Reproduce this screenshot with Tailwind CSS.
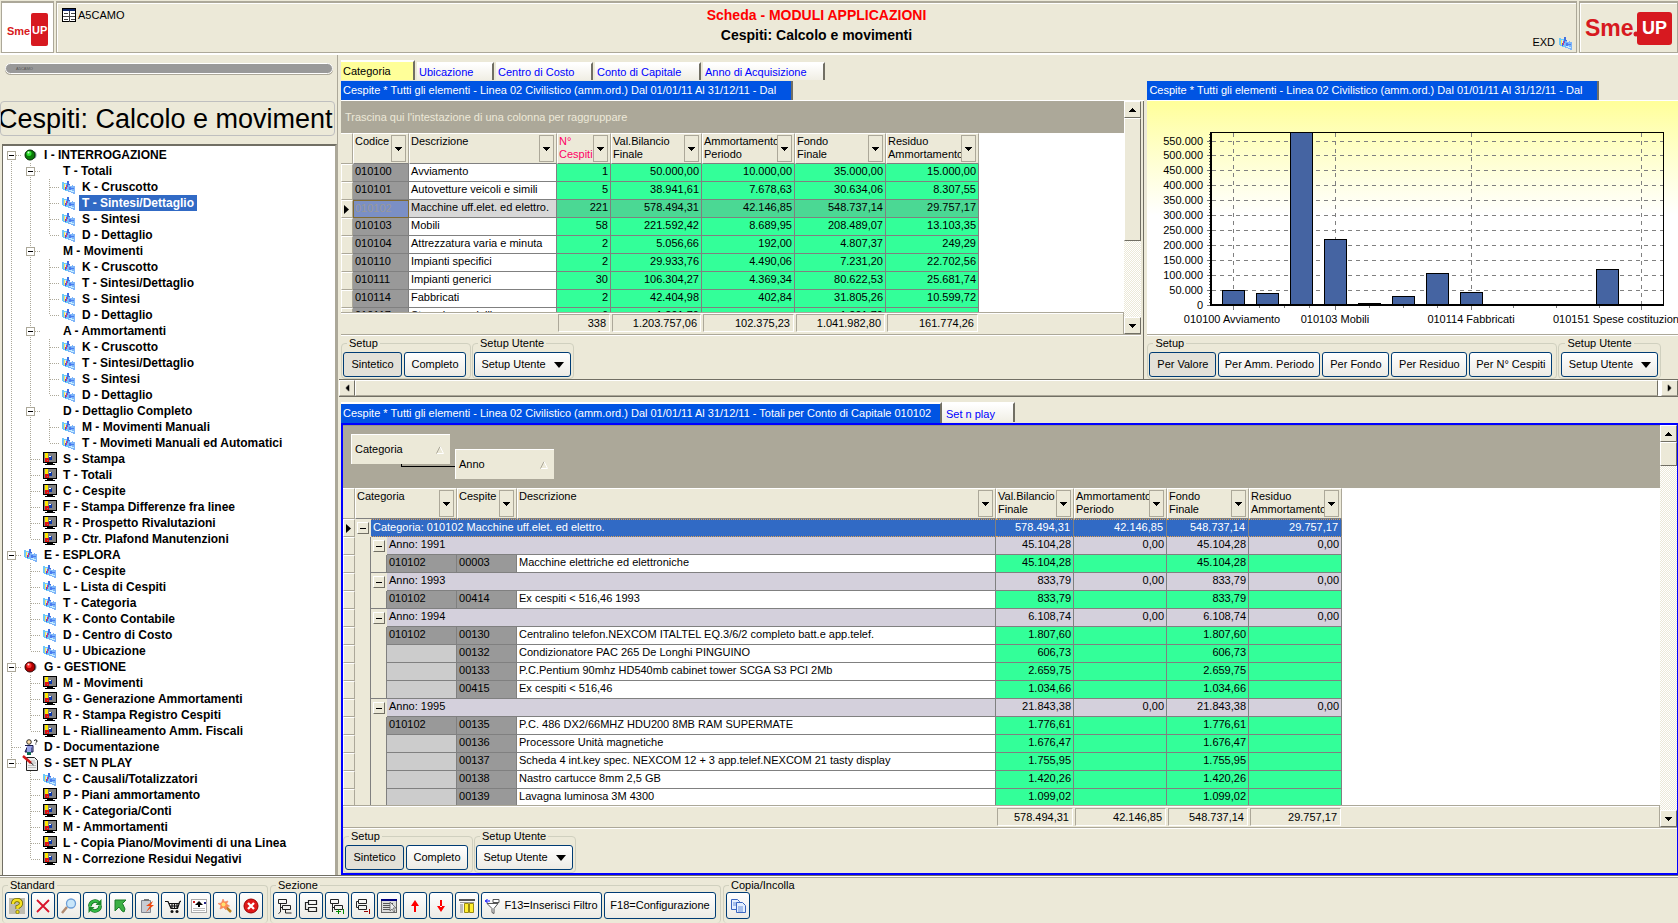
<!DOCTYPE html>
<html lang="it">
<head>
<meta charset="utf-8">
<title>Cespiti: Calcolo e movimenti</title>
<script src="https://cdn.jsdelivr.net/npm/@tailwindcss/browser@4"></script>
</head>
<body class="flex min-h-screen flex-col overflow-x-hidden bg-[#ece9d8] font-['Liberation_Sans',Arial,sans-serif] text-[11px] leading-[13px] text-black">

<svg class="hidden" aria-hidden="true">
  <symbol id="i-view" viewBox="0 0 13 13" shape-rendering="crispEdges"><path d="M0 1h2v1h4v8H3V9H1V8H0z" fill="#6fc8fa"/><path d="M2 3h1v5H2z" fill="#ffe65a"/><path d="M3 3h1v3H3z" fill="#c8f0ff"/><path d="M4 4h1v4H4z" fill="#d8407a"/><path d="M3 6h1v3H3z" fill="#4a50d8"/><path d="M5 0h2v3h1v3H5z" fill="#3f6fe0"/><path d="M6 4h2v1h2v-1h1v1h2v8h-2v-1H9v-1H6z" fill="#7db4f8"/><path d="M7 6h2v1h3v1H9v1H7z" fill="#4a7df0"/><path d="M7 9h3v1h2v1h-3v-1H7z" fill="#c4ecff"/></symbol>
  <symbol id="i-mon" viewBox="0 0 14 14" shape-rendering="crispEdges"><rect x="0" y="0" width="14" height="11" fill="#000"/><rect x="1" y="1" width="12" height="9" fill="#808080"/><rect x="2" y="1" width="3" height="5" fill="#ffe800"/><path d="M2 6h4v4H2z" fill="#e01010"/><path d="M3.500 7.500h1v1h-1z" fill="#808080"/><rect x="6" y="4" width="3" height="4" fill="#0a36a8"/><path d="M6 4h2v1H6z" fill="#fff"/><rect x="4" y="11" width="6" height="1" fill="#000"/><rect x="2" y="12" width="10" height="1" fill="#000"/></symbol>
  <symbol id="i-green" viewBox="0 0 14 14"><circle cx="8.500" cy="7" r="4" fill="#8a9aa8"/><circle cx="6" cy="7" r="5" fill="#0a7a0a" stroke="#002800"/><circle cx="5" cy="5.500" r="2.500" fill="#30e030"/><circle cx="4.500" cy="4.500" r="1" fill="#d8ffd8"/></symbol>
  <symbol id="i-red" viewBox="0 0 14 14"><circle cx="8.500" cy="7" r="4" fill="#8a9aa8"/><circle cx="6" cy="7" r="5" fill="#b00000" stroke="#300000"/><circle cx="5" cy="5.500" r="2.500" fill="#ff3030"/><circle cx="4.500" cy="4.500" r="1" fill="#ffe0e0"/></symbol>
  <symbol id="i-doc" viewBox="0 0 14 16"><circle cx="5" cy="3" r="2.300" fill="#ffe0b0" stroke="#000" stroke-width=".8"/><path d="M1 6.500h8V13H7V8.500M3 8.500V13H1z" fill="#9aa4ea" stroke="#14144a"/><path d="M3 7h4v6H3z" fill="#9aa4ea"/><path d="M3 13h4v3H3z" fill="#0c6a50"/><path d="M10.500 2q0-1.200 1.200-1.200T13 2t-1.200 1.500M11.800 4.500v1" fill="none" stroke="#111"/></symbol>
  <symbol id="i-note" viewBox="0 0 16 16"><path d="M4.500 2.500h8l3 3v10h-11z" fill="#f0f0f0" stroke="#222"/><path d="M7 8h7M6 10.500h8M6 12.500h8M9 6h4" stroke="#bdbdbd"/><path d="M1 1l8 7" stroke="#d01818" stroke-width="2.500"/><path d="M8.500 7.500l3 2.500" stroke="#222"/></symbol>
  <symbol id="i-tri" viewBox="0 0 7 4"><path d="M0 0h7v1H6v1H5v1H4v1H3V3H2V2H1V1H0z"/></symbol>
</svg>

<!-- Header -->
<header class="flex h-[55px] shrink-0 gap-0.5 border-b-2 border-white pt-px pl-px">
  <div class="flex w-[53px] items-center justify-center border border-t-2 border-[#aca899] bg-white">
    <svg width="48" height="40" viewBox="0 0 48 40" role="img" aria-label="Sme.UP"><rect x="27" y="5" width="17" height="33" rx="2" fill="#d71920"/><text x="3" y="27" font-family="Liberation Sans" font-weight="700" font-size="11" fill="#d71920">Sme</text><text x="28" y="26" font-family="Liberation Sans" font-weight="700" font-size="11" fill="#fff">UP</text></svg>
  </div>
  <div class="grid flex-1 grid-cols-[1fr_auto_1fr] border border-t-2 border-[#aca899] px-1 shadow-[inset_1px_1px_0_#fff]">
    <div class="flex items-start gap-0.5 pt-1">
      <svg class="mt-px ml-px" width="14" height="14" viewBox="0 0 14 14" shape-rendering="crispEdges"><rect x=".500" y=".500" width="13" height="13" fill="#fff" stroke="#000"/><rect x="1" y="1" width="12" height="2" fill="#0a246a"/><path d="M7.500 3v11M1 8.500h12M2 5.500h4M2 11.500h4M9 5.500h4M9 11.500h4" stroke="#444"/></svg>
      <span class="pt-0.5">A5CAMO</span>
    </div>
    <div class="text-center text-[14px] font-bold">
      <p class="pt-[3px] leading-[18px] text-[#ff0000]">Scheda - MODULI APPLICAZIONI</p>
      <h1 class="leading-[22px]">Cespiti: Calcolo e movimenti</h1>
    </div>
    <div class="flex items-end justify-end gap-1 pb-0.5"><span class="pb-px">EXD</span><svg width="13" height="13"><use href="#i-view"/></svg></div>
  </div>
  <div class="flex w-[99px] items-center justify-center border border-t-2 border-[#aca899] shadow-[inset_1px_1px_0_#fff]">
    <svg width="90" height="40" viewBox="0 0 90 40" role="img" aria-label="Sme.UP"><rect x="53" y="4" width="35" height="33" rx="3" fill="#d71920"/><text x="1" y="28" font-family="Liberation Sans" font-weight="700" font-size="23" fill="#d71920">Sme</text><circle cx="52" cy="26" r="2.500" fill="#d71920"/><text x="58" y="26" font-family="Liberation Sans" font-weight="700" font-size="18" fill="#fff">UP</text></svg>
  </div>
</header>

<main class="flex flex-1">
  <!-- Navigation -->
  <aside class="flex w-[337px] shrink-0 flex-col">
    <div class="mt-2 ml-[5px] mr-1 flex h-[11px] items-center rounded-full border border-white bg-[#999] px-2.5 shadow-[0_1px_0_#aca899]"><span class="text-[4px] leading-[5px] text-[#555]">A5CAMO</span></div>
    <div class="mt-[27px] mr-0.5 flex h-[35px] items-center justify-start overflow-hidden rounded-[4px] border border-[#bfbfbf]">
      <h2 class="-ml-[3px] text-[27px] leading-[34px] whitespace-nowrap">Cespiti: Calcolo e movimenti</h2>
    </div>
    <nav class="mt-2 ml-0.5 flex-1 border-t-2 border-r-2 border-l border-[#716f64] border-r-[#aca899] bg-white pt-px" aria-label="Menu">
      <ul id="tree" class="text-[12px] leading-4 font-bold"></ul>
    </nav>
  </aside>

  <div class="flex min-w-0 flex-1 flex-col border-l border-[#aca899]">
    <div class="flex">
      <!-- Summary panel -->
      <section class="flex min-w-0 flex-[807] flex-col pt-[5px] pl-[3px]">
        <div class="flex items-end gap-0.5" role="tablist">
          <button role="tab" class="h-5 w-[74px] border-t-2 border-r-2 border-t-white border-r-[#716f64] bg-[#ffff99] pl-0.5 text-left">Categoria</button>
          <button role="tab" class="h-[18px] w-[77px] border-t-2 border-r-2 border-t-white border-r-[#716f64] bg-linear-to-b from-white to-[#f0eee4] pl-0.5 text-left text-[#0000ff]">Ubicazione</button>
          <button role="tab" class="h-[18px] w-[97px] border-t-2 border-r-2 border-t-white border-r-[#716f64] bg-linear-to-b from-white to-[#f0eee4] pl-0.5 text-left text-[#0000ff]">Centro di Costo</button>
          <button role="tab" class="h-[18px] w-[106px] border-t-2 border-r-2 border-t-white border-r-[#716f64] bg-linear-to-b from-white to-[#f0eee4] pl-0.5 text-left text-[#0000ff]">Conto di Capitale</button>
          <button role="tab" class="h-[18px] w-[122px] border-t-2 border-r-2 border-t-white border-r-[#716f64] bg-linear-to-b from-white to-[#f0eee4] pl-0.5 text-left text-[#0000ff]">Anno di Acquisizione</button>
        </div>
        <div class="mt-px flex h-5 border-b border-white">
          <h3 class="w-[452px] border-r-2 border-[#716f64] bg-[#0054e3] pl-0.5 leading-[18px] whitespace-nowrap text-white">Cespite * Tutti gli elementi - Linea 02 Civilistico (amm.ord.) Dal 01/01/11 Al 31/12/11 - Dal</h3>
        </div>
        <div class="border-r border-[#716f64] pr-0.5">
          <div class="flex h-[234px] border-b border-[#aca899] bg-white">
            <div class="flex min-w-0 flex-1 flex-col">
              <p class="h-8 shrink-0 bg-[#aca899] pl-1 leading-8 text-[#ece9d8]">Trascina qui l'intestazione di una colonna per raggruppare</p>
              <div class="h-[179px] shrink-0 overflow-hidden" id="t1"></div>
              <div id="f1" class="flex flex-1 border-t border-r border-[#aca899] bg-[#ece9d8] pl-[216px] shadow-[inset_0_1px_0_#fff]"></div>
            </div>
            <div class="flex w-[17px] flex-col bg-[repeating-conic-gradient(#fff_0_25%,#ece9d8_0_50%)] bg-[length:2px_2px]">
              <button aria-label="Su" class="flex h-[17px] items-center justify-center border border-t-white border-r-[#716f64] border-b-[#716f64] border-l-white bg-[#ece9d8]"><svg class="rotate-180" width="7" height="4"><use href="#i-tri"/></svg></button>
              <div class="h-[123px] border border-t-white border-r-[#716f64] border-b-[#716f64] border-l-white bg-[#ece9d8]"></div>
              <button aria-label="Giù" class="mt-auto flex h-[17px] items-center justify-center border border-t-white border-r-[#716f64] border-b-[#716f64] border-l-white bg-[#ece9d8]"><svg width="7" height="4"><use href="#i-tri"/></svg></button>
            </div>
          </div>
          <div class="flex h-11 gap-px border-t border-white pt-px">
            <fieldset class="flex gap-0.5 rounded-[4px] border border-[#d0d0bf] pr-1 pl-px"><legend class="ml-1 px-0.5">Setup</legend>
              <button class="mt-0.5 h-[25px] w-[59px] rounded-[3px] border border-[#003c74] bg-[#e3e1d8]">Sintetico</button>
              <button class="mt-0.5 h-[25px] w-[62px] rounded-[3px] border border-[#003c74] bg-linear-to-b from-white to-[#ecebe5]">Completo</button>
            </fieldset>
            <fieldset class="flex rounded-[4px] border border-[#d0d0bf] pr-0.5 pl-px"><legend class="ml-1 px-0.5">Setup Utente</legend>
              <button class="mt-0.5 flex h-[25px] w-[97px] items-center justify-center gap-2 rounded-[3px] border border-[#003c74] bg-linear-to-b from-white to-[#ecebe5]" aria-haspopup="menu">Setup Utente <svg width="10" height="6"><path d="M0 0h10L5 6z"/></svg></button>
            </fieldset>
          </div>
        </div>
      </section>

      <!-- Chart panel -->
      <section class="flex min-w-0 flex-[533] flex-col pt-[25px] pl-[3px]">
        <div class="mt-px flex h-5 border-b border-white">
          <h3 class="w-[452px] border-r-2 border-[#716f64] bg-[#0054e3] pl-0.5 leading-[18px] whitespace-nowrap text-white">Cespite * Tutti gli elementi - Linea 02 Civilistico (amm.ord.) Dal 01/01/11 Al 31/12/11 - Dal</h3>
        </div>
        <div class="h-[234px] overflow-hidden border-b border-[#aca899] bg-linear-to-b from-[#ffff99] to-white to-[49%]">
          <svg id="chart" width="531" height="234" viewBox="1147 101 531 234" font-family="Liberation Sans" font-size="11" shape-rendering="crispEdges" role="img" aria-label="Valore per categoria"></svg>
        </div>
        <div class="flex h-11 gap-px border-t border-white pt-px">
          <fieldset class="flex gap-0.5 rounded-[4px] border border-[#d0d0bf] pr-1 pl-px"><legend class="ml-1 px-0.5">Setup</legend>
            <button class="mt-0.5 h-[25px] w-[67px] rounded-[3px] border border-[#003c74] bg-[#e3e1d8]">Per Valore</button>
            <button class="mt-0.5 h-[25px] w-[102px] rounded-[3px] border border-[#003c74] bg-linear-to-b from-white to-[#ecebe5]">Per Amm. Periodo</button>
            <button class="mt-0.5 h-[25px] w-[67px] rounded-[3px] border border-[#003c74] bg-linear-to-b from-white to-[#ecebe5]">Per Fondo</button>
            <button class="mt-0.5 h-[25px] w-[76px] rounded-[3px] border border-[#003c74] bg-linear-to-b from-white to-[#ecebe5]">Per Residuo</button>
            <button class="mt-0.5 h-[25px] w-[83px] rounded-[3px] border border-[#003c74] bg-linear-to-b from-white to-[#ecebe5]">Per N° Cespiti</button>
          </fieldset>
          <fieldset class="flex rounded-[4px] border border-[#d0d0bf] px-0.5"><legend class="ml-1 px-0.5">Setup Utente</legend>
            <button class="mt-0.5 flex h-[25px] w-[97px] items-center justify-center gap-2 rounded-[3px] border border-[#003c74] bg-linear-to-b from-white to-[#ecebe5]" aria-haspopup="menu">Setup Utente <svg width="10" height="6"><path d="M0 0h10L5 6z"/></svg></button>
          </fieldset>
        </div>
      </section>
    </div>

    <!-- Horizontal scroll bar -->
    <div class="ml-px flex h-[18px] border-y border-[#716f64]">
      <button aria-label="Sinistra" class="flex w-4 items-center justify-center border border-t-white border-r-[#716f64] border-b-[#aca899] border-l-white"><svg class="rotate-90" width="7" height="4"><use href="#i-tri"/></svg></button>
      <div class="flex-1 border border-t-white border-r-[#716f64] border-b-[#aca899] border-l-white"></div>
      <div class="w-[3px] bg-white"></div>
      <button aria-label="Destra" class="flex w-[17px] items-center justify-center border border-t-white border-r-[#716f64] border-b-[#aca899] border-l-white"><svg class="-rotate-90" width="7" height="4"><use href="#i-tri"/></svg></button>
    </div>

    <!-- Detail panel -->
    <section class="mt-[5px] flex flex-1 flex-col pl-[3px]">
      <div class="flex" role="tablist">
        <button role="tab" class="h-[21px] w-[601px] border-t-2 border-r-2 border-t-white border-r-[#716f64] bg-[#0054e3] pl-0.5 text-left whitespace-nowrap text-white">Cespite * Tutti gli elementi - Linea 02 Civilistico (amm.ord.) Dal 01/01/11 Al 31/12/11 - Totali per Conto di Capitale 010102</button>
        <button role="tab" class="h-[20px] w-[73px] border-t-2 border-r-2 border-t-white border-r-[#716f64] bg-linear-to-b from-white to-[#f0eee4] pt-0.5 pl-1 text-left text-[#0000ff]">Set n play</button>
      </div>
      <div class="flex flex-1 flex-col border-2 border-r-1 border-[#0000ff]">
        <div class="flex flex-1 border-b border-[#aca899] bg-white">
          <div class="flex min-w-0 flex-1 flex-col">
            <div class="relative flex h-[63px] shrink-0 items-start gap-[5px] border-t border-[#999685] bg-[#aca899] pt-2 pl-2">
              <button class="flex h-[30px] w-[99px] items-center justify-between border-t border-l border-white bg-[#ece9d8] pr-1.5 pl-[3px]">Categoria <svg width="8" height="8" viewBox="0 0 8 8"><path d="M.500 7.500L4 .500" stroke="#aca899" fill="none"/><path d="M4 .500l3.500 7H1" stroke="#fff" fill="none"/></svg></button>
              <button class="mt-[15px] flex h-[30px] w-[99px] items-center justify-between border-t border-l border-white bg-[#ece9d8] pr-1.5 pl-[3px]">Anno <svg width="8" height="8" viewBox="0 0 8 8"><path d="M.500 7.500L4 .500" stroke="#aca899" fill="none"/><path d="M4 .500l3.500 7H1" stroke="#fff" fill="none"/></svg></button>
              <div class="absolute top-[38px] left-[58px] h-[3px] w-[54px] border-b border-l border-black"></div>
            </div>
            <div class="min-h-[317px] flex-[1_1_0] overflow-hidden" id="t2"></div>
            <div id="f2" class="flex h-[22px] shrink-0 border-t border-r border-[#aca899] bg-[#ece9d8] pt-px pl-[653px] shadow-[inset_0_1px_0_#fff]"></div>
          </div>
          <div class="flex w-[17px] flex-col bg-[repeating-conic-gradient(#fff_0_25%,#ece9d8_0_50%)] bg-[length:2px_2px]">
            <button aria-label="Su" class="flex h-[17px] items-center justify-center border border-t-white border-r-[#716f64] border-b-[#716f64] border-l-white bg-[#ece9d8]"><svg class="rotate-180" width="7" height="4"><use href="#i-tri"/></svg></button>
            <div class="h-6 border border-t-white border-r-[#716f64] border-b-[#716f64] border-l-white bg-[#ece9d8]"></div>
            <button aria-label="Giù" class="mt-auto flex h-[17px] items-center justify-center border border-t-white border-r-[#716f64] border-b-[#716f64] border-l-white bg-[#ece9d8]"><svg width="7" height="4"><use href="#i-tri"/></svg></button>
          </div>
        </div>
        <div class="flex h-[45px] gap-px border-t border-white pt-px">
          <fieldset class="flex gap-0.5 rounded-[4px] border border-[#d0d0bf] pr-1 pl-px"><legend class="ml-1 px-0.5">Setup</legend>
            <button class="mt-0.5 h-[25px] w-[59px] rounded-[3px] border border-[#003c74] bg-[#e3e1d8]">Sintetico</button>
            <button class="mt-0.5 h-[25px] w-[62px] rounded-[3px] border border-[#003c74] bg-linear-to-b from-white to-[#ecebe5]">Completo</button>
          </fieldset>
          <fieldset class="flex rounded-[4px] border border-[#d0d0bf] pr-0.5 pl-px"><legend class="ml-1 px-0.5">Setup Utente</legend>
            <button class="mt-0.5 flex h-[25px] w-[97px] items-center justify-center gap-2 rounded-[3px] border border-[#003c74] bg-linear-to-b from-white to-[#ecebe5]" aria-haspopup="menu">Setup Utente <svg width="10" height="6"><path d="M0 0h10L5 6z"/></svg></button>
          </fieldset>
        </div>
      </div>
    </section>
  </div>
</main>

<!-- Tool bar -->
<footer class="flex h-12 shrink-0 gap-0.5 border-t border-[#716f64] pt-0.5 pl-0.5 shadow-[inset_0_1px_0_#fff,inset_0_2px_0_#aca899]">
  <fieldset class="flex gap-0.5 rounded-[4px] border border-b-0 border-[#d0d0bf] pr-1 pl-0.5"><legend class="ml-[3px] px-0.5 leading-[14px]">Standard</legend><div id="std" class="flex gap-0.5"></div></fieldset>
  <fieldset class="flex gap-0.5 rounded-[4px] border border-b-0 border-[#d0d0bf] pr-1 pl-0.5"><legend class="ml-[3px] px-0.5 leading-[14px]">Sezione</legend><div id="sez" class="flex gap-0.5"></div>
    <button class="flex h-[27px] w-[121px] items-center justify-center gap-1 rounded-[3px] border border-[#003c74] bg-linear-to-b from-white to-[#ecebe5] whitespace-nowrap"><svg width="15" height="16" viewBox="0 0 15 16"><path d="M2 5.500h11l-4 5v5l-2-1v-4z" fill="#fff" stroke="#555"/><path d="M8 1.500h6v3H8z" fill="#fff" stroke="#555"/><path d="M0 3h5M2.500 1L.500 3l2 2" stroke="#00f" fill="none"/></svg>F13=Inserisci Filtro</button>
    <button class="h-[27px] w-[112px] rounded-[3px] border border-[#003c74] bg-linear-to-b from-white to-[#ecebe5] whitespace-nowrap">F18=Configurazione</button>
  </fieldset>
  <fieldset class="flex rounded-[4px] border border-r-0 border-b-0 border-[#d0d0bf] pl-0.5"><legend class="ml-[3px] px-0.5 leading-[14px]">Copia/Incolla</legend><div id="cop" class="flex"></div></fieldset>
</footer>

<script>
const $ = id => document.getElementById(id);

/* ---- tree: [level, icon, text, expandable] ---- */
const nodes = [
[0,'i-green','I - INTERROGAZIONE',1],[1,'','T - Totali',1],[2,'i-view','K - Cruscotto'],[2,'i-view','T - Sintesi/Dettaglio'],[2,'i-view','S - Sintesi'],[2,'i-view','D - Dettaglio'],
[1,'','M - Movimenti',1],[2,'i-view','K - Cruscotto'],[2,'i-view','T - Sintesi/Dettaglio'],[2,'i-view','S - Sintesi'],[2,'i-view','D - Dettaglio'],
[1,'','A - Ammortamenti',1],[2,'i-view','K - Cruscotto'],[2,'i-view','T - Sintesi/Dettaglio'],[2,'i-view','S - Sintesi'],[2,'i-view','D - Dettaglio'],
[1,'','D - Dettaglio Completo',1],[2,'i-view','M - Movimenti Manuali'],[2,'i-view','T - Movimeti Manuali ed Automatici'],
[1,'i-mon','S - Stampa'],[1,'i-mon','T - Totali'],[1,'i-mon','C - Cespite'],[1,'i-mon','F - Stampa Differenze fra linee'],[1,'i-mon','R - Prospetto Rivalutazioni'],[1,'i-mon','P - Ctr. Plafond Manutenzioni'],
[0,'i-view','E - ESPLORA',1],[1,'i-view','C - Cespite'],[1,'i-view','L - Lista di Cespiti'],[1,'i-view','T - Categoria'],[1,'i-view','K - Conto Contabile'],[1,'i-view','D - Centro di Costo'],[1,'i-view','U - Ubicazione'],
[0,'i-red','G - GESTIONE',1],[1,'i-mon','M - Movimenti'],[1,'i-mon','G - Generazione Ammortamenti'],[1,'i-mon','R - Stampa Registro Cespiti'],[1,'i-mon','L - Riallineamento Amm. Fiscali'],
[0,'i-doc','D - Documentazione'],[0,'i-note','S - SET N PLAY',1],
[1,'i-view','C - Causali/Totalizzatori'],[1,'i-mon','P - Piani ammortamento'],[1,'i-mon','K - Categoria/Conti'],[1,'i-mon','M - Ammortamenti'],[1,'i-mon','L - Copia Piano/Movimenti di una Linea'],[1,'i-mon','N - Correzione Residui Negativi']];
const sizes = { 'i-view': [13, 13], 'i-mon': [14, 14], 'i-green': [14, 14], 'i-red': [14, 14], 'i-doc': [14, 16], 'i-note': [16, 16] };
const continues = (i, lv) => { for (let k = i + 1; k < nodes.length; k++) { if (nodes[k][0] === lv) return true; if (nodes[k][0] < lv) return false; } return false; };
$('tree').innerHTML = nodes.map(([lv, icon, text, box], i) => {
  let g = '';
  for (let c = 0; c <= lv; c++) {
    const down = continues(i, c), own = c === lv;
    let d = '';
    if (own) d += i ? (down ? 'M8.500 0V16' : 'M8.500 0V8') : 'M8.500 8V16';
    else if (down) d += 'M8.500 0V16';
    if (own) d += 'M9 8.500H19';
    g += `<svg class="shrink-0" width="19" height="16" shape-rendering="crispEdges"><path d="${d}" stroke="#aca899" stroke-dasharray="1 1" fill="none"/>${own && box ? '<rect x="4.500" y="4.500" width="8" height="8" fill="#fff" stroke="#aca899"/><path d="M6 8.500h5" stroke="#000"/>' : ''}</svg>`;
  }
  const ic = icon ? `<svg width="${sizes[icon][0]}" height="${sizes[icon][1]}"><use href="#${icon}"/></svg>` : '';
  return `<li class="flex h-4 whitespace-nowrap">${g}<span class="${icon === 'i-note' ? 'flex w-[19px] shrink-0 items-center' : 'flex w-[19px] shrink-0 items-center pl-0.5'}">${ic}</span><a href="#" class="${i === 3 ? 'bg-[#316ac5] px-[3px] text-white' : 'px-[3px]'}">${text}</a></li>`;
}).join('');

/* ---- tables ---- */
const cols = ws => '<colgroup>' + ws.map(w => `<col style="width:${w}px">`).join('') + '</colgroup>';
const th = (t, span = 1, pink) => `<th colspan="${span}" class="h-[31px] border-t border-r border-b border-l border-t-white border-r-[#aca899] border-b-[#808080] border-l-white bg-[#ece9d8] p-0 text-left align-top font-normal"><div class="flex justify-between pt-px pr-0.5 pl-px"><span class="${pink ? 'w-0 flex-1 whitespace-nowrap text-[#ff0066]' : 'w-0 flex-1 whitespace-nowrap'}">${t}</span><button aria-label="Filtro" class="flex h-[27px] w-[15px] shrink-0 items-center justify-center border border-[#aca899] bg-[#ece9d8]"><svg width="7" height="4"><use href="#i-tri"/></svg></button></div></th>`;
const thInd = '<th class="h-[31px] border-t border-r border-b border-t-white border-r-[#aca899] border-b-[#aca899] bg-[#ece9d8] p-0"></th>';
const ind = cur => `<td class="h-[18px] border-t border-r border-b border-l border-t-white border-r-[#aca899] border-b-[#aca899] border-l-white bg-[#ece9d8] p-0">${cur ? '<svg class="ml-0.5" width="5" height="9"><path d="M0 0l5 4.500L0 9z"/></svg>' : ''}</td>`;
const N = 'h-[18px] overflow-hidden border-r border-b border-[#808080] bg-[#33ff99] py-0 pr-0.5 text-right align-top leading-[15px]';
const NS = 'h-[18px] overflow-hidden border-r border-b border-[#808080] bg-[#4bd894] py-0 pr-0.5 text-right align-top leading-[15px]';
const NG = 'h-[18px] overflow-hidden border-r border-b border-[#808080] bg-[#d4d0dc] py-0 pr-0.5 text-right align-top leading-[15px]';
const NB = 'h-[18px] overflow-hidden border-t border-r border-b border-t-[#e0a050] border-r-[#808080] border-b-[#e0a050] [border-bottom-style:dotted] [border-top-style:dotted] bg-[#316ac5] py-0 pr-[3px] text-right align-top leading-[14px] text-white';
const TW = 'h-[18px] overflow-hidden border-r border-b border-[#808080] bg-white py-0 pl-0.5 align-top leading-[15px] whitespace-nowrap';
const TS = 'h-[18px] overflow-hidden border-r border-b border-[#808080] bg-[#d8d8d8] py-0 pl-0.5 align-top leading-[15px] whitespace-nowrap';
const CD = 'h-[18px] overflow-hidden border-r border-b border-[#808080] bg-[#999999] py-0 pl-0.5 align-top leading-[15px]';
const CS = 'h-[18px] overflow-hidden border border-[#806a30] bg-[#7b8fc4] py-0 pl-px align-top leading-[14px] text-[#999999]';
const CE = 'h-[18px] border-r border-b border-[#808080] bg-[#cccccc] p-0';
const td = (c, t, span = 1) => `<td class="${c}" colspan="${span}">${t}</td>`;

const rows1 = [
['010100','Avviamento','1','50.000,00','10.000,00','35.000,00','15.000,00'],
['010101','Autovetture veicoli e simili','5','38.941,61','7.678,63','30.634,06','8.307,55'],
['010102','Macchine uff.elet. ed elettro.','221','578.494,31','42.146,85','548.737,14','29.757,17'],
['010103','Mobili','58','221.592,42','8.689,95','208.489,07','13.103,35'],
['010104','Attrezzatura varia e minuta','2','5.056,66','192,00','4.807,37','249,29'],
['010110','Impianti specifici','2','29.933,76','4.490,06','7.231,20','22.702,56'],
['010111','Impianti generici','30','106.304,27','4.369,34','80.622,53','25.681,74'],
['010114','Fabbricati','2','42.404,98','402,84','31.805,26','10.599,72'],
['010117','Stampi e modelli','6','1.291,70','','1.291,70','']];
$('t1').innerHTML = `<table class="w-[638px] table-fixed border-separate border-spacing-0">${cols([12,56,148,54,91,93,91,93])}<thead><tr>${thInd}${th('Codice')}${th('Descrizione')}${th('N°<br>Cespiti',1,1)}${th('Val.Bilancio<br>Finale')}${th('Ammortamento<br>Periodo')}${th('Fondo<br>Finale')}${th('Residuo<br>Ammortamento')}</tr></thead><tbody>` +
 rows1.map((r, i) => { const s = i === 2; return '<tr>' + ind(s) + td(s ? CS : CD, r[0]) + td(s ? TS : TW, r[1]) + r.slice(2).map(v => td(s ? NS : N, v)).join('') + '</tr>'; }).join('') + '</tbody></table>';

const foot = (id, list) => $(id).innerHTML = list.map(([w, v]) => `<div class="shrink-0 p-px" style="width:${w}px"><div class="h-[18px] border border-t-[#aca899] border-r-white border-b-white border-l-[#aca899] pr-[3px] text-right leading-4">${v}</div></div>`).join('');
foot('f1', [[54,'338'],[91,'1.203.757,06'],[93,'102.375,23'],[91,'1.041.982,80'],[93,'161.774,26']]);
foot('f2', [[78,'578.494,31'],[93,'42.146,85'],[82,'548.737,14'],[93,'29.757,17']]);

const minus = '<button aria-label="Comprimi" class="ml-0.5 flex h-3 w-3 items-center justify-center border border-t-white border-r-[#716f64] border-b-[#716f64] border-l-white bg-[#ece9d8]"><svg width="6" height="1"><rect width="6" height="1"/></svg></button>';
const data = [['1991','45.104,28',[['00003','Macchine elettriche ed elettroniche','45.104,28']]],
['1993','833,79',[['00414','Ex cespiti &lt; 516,46 1993','833,79']]],
['1994','6.108,74',[['00130','Centralino telefon.NEXCOM ITALTEL EQ.3/6/2 completo batt.e app.telef.','1.807,60'],['00132','Condizionatore PAC 265 De Longhi PINGUINO','606,73'],['00133','P.C.Pentium 90mhz HD540mb cabinet tower SCGA S3 PCI 2Mb','2.659,75'],['00415','Ex cespiti &lt; 516,46','1.034,66']]],
['1995','21.843,38',[['00135','P.C. 486 DX2/66MHZ HDU200 8MB RAM SUPERMATE','1.776,61'],['00136','Processore Unità magnetiche','1.676,47'],['00137','Scheda 4 int.key spec. NEXCOM 12 + 3 app.telef.NEXCOM 21 tasty display','1.755,95'],['00138','Nastro cartucce 8mm 2,5 GB','1.420,26'],['00139','Lavagna luminosa 3M 4300','1.099,02']]]];
const IN = 'h-[18px] border-r border-[#808080] bg-[#ece9d8] p-0';
const INL = 'h-[18px] border-r border-b border-[#808080] bg-[#ece9d8] p-0';
const BX = 'h-[18px] bg-[#ece9d8] p-0';
let b = '<tr>' + ind(1) + td(BX, minus) + td('h-[18px] border-t border-r border-b border-t-[#e0a050] border-r-[#808080] border-b-[#e0a050] [border-bottom-style:dotted] [border-top-style:dotted] bg-[#316ac5] py-0 pl-0.5 align-top leading-[14px] text-white', 'Categoria: 010102 Macchine uff.elet. ed elettro.', 4) + ['578.494,31','42.146,85','548.737,14','29.757,17'].map(v => td(NB, v)).join('') + '</tr>';
for (const [y, tot, items] of data) {
  b += '<tr>' + ind() + td(IN, '') + td(BX, minus) + td('h-[18px] border-r border-b border-[#808080] bg-[#d4d0dc] py-0 pl-0.5 align-top leading-[15px]', 'Anno: ' + y, 3) + [tot,'0,00',tot,'0,00'].map(v => td(NG, v)).join('') + '</tr>';
  items.forEach((r, i) => { b += '<tr>' + ind() + td(IN, '') + td(i === items.length - 1 && y !== '1995' ? INL : IN, '') + (i ? td(CE, '') : td(CD, '010102')) + td(CD, r[0]) + td(TW, r[1]) + [r[2],'',r[2],''].map(v => td(N, v)).join('') + '</tr>'; });
}
$('t2').innerHTML = `<table class="w-[999px] table-fixed border-separate border-spacing-0">${cols([12,16,16,70,60,479,78,93,82,93])}<thead><tr>${thInd}${th('Categoria',3)}${th('Cespite')}${th('Descrizione')}${th('Val.Bilancio<br>Finale')}${th('Ammortamento<br>Periodo')}${th('Fondo<br>Finale')}${th('Residuo<br>Ammortamento')}</tr></thead><tbody>${b}</tbody></table>`;

/* ---- chart ---- */
let s = '';
const labels = ['0','50.000','100.000','150.000','200.000','250.000','300.000','350.000','400.000','450.000','500.000','550.000'];
labels.forEach((l, i) => { const y = 305.5 - 15 * i + (i === 11 ? 1 : 0); s += `<text x="1203" y="${y + 3.500}" text-anchor="end">${l}</text><path d="M1207 ${y}h4" stroke="#777"/>`; if (i) s += `<path d="M1212 ${y}H1663" stroke="#808080" stroke-dasharray="4 4"/>`; });
s += '<path d="M1209.500 134V304" stroke="#555" stroke-dasharray="1 2"/>';
[1233.5,1335.5,1471.5,1641.5].forEach(x => s += `<path d="M${x} 133V305" stroke="#808080" stroke-dasharray="4 4"/><path d="M${x} 306v4" stroke="#777"/>`);
[1259.5,1284.5,1309.5,1369.5,1403.5,1437.5,1513.5,1556.5,1599.5].forEach(x => s += `<path d="M${x} 306v2" stroke="#777"/>`);
s += '<rect x="1211" y="132.500" width="452.500" height="173" fill="none" stroke="#000"/>';
[[1222,290],[1256,293],[1290,132],[1324,239],[1358,303],[1392,296],[1426,273],[1460,292],[1596,269]].forEach(([x, y]) => s += `<rect x="${x + .5}" y="${y + .5}" width="22" height="${305 - y}" fill="#4564a2" stroke="#000"/>`);
s += '<path d="M1211 132V306M1210 305H1664" stroke="#000" stroke-width="2"/>';
[[1232,'010100 Avviamento'],[1335,'010103 Mobili'],[1471,'010114 Fabbricati']].forEach(([x, t]) => s += `<text x="${x}" y="323" text-anchor="middle">${t}</text>`);
s += '<text x="1553" y="323">010151 Spese costituzione</text>';
$('chart').innerHTML = s;

/* ---- tool bar ---- */
const tb = list => list.map(([n, g]) => `<button aria-label="${n}" class="flex h-[27px] w-6 items-center justify-center rounded-[3px] border border-[#003c74] bg-linear-to-b from-white to-[#ecebe5]"><svg class="shrink-0" width="16" height="16" viewBox="0 0 16 16" fill="none">${g}</svg></button>`).join('');
const tree = '<path d="M1.500 1.500h8v4h-8zM5.500 7.500h8v4h-8zM3.500 6v8M3.500 9.500h2" stroke="#222"/>';
$('std').innerHTML = tb([
['Aiuto','<rect width="16" height="16" fill="#c0bdb0"/><path d="M4 6q0-4 4-4t4 3.500Q12 8 8.500 9v2" stroke="#6b6300" stroke-width="4"/><path d="M4 6q0-4 4-4t4 3.500Q12 8 8.500 9v2" stroke="#f4e020" stroke-width="2.500"/><circle cx="8.500" cy="14" r="1.700" fill="#f4e020" stroke="#6b6300" stroke-width=".7"/>'],
['Chiudi','<path d="M2 2l12 12M14 2L2 14" stroke="#d8142c" stroke-width="1.800"/>'],
['Cerca','<path d="M1 15l5-6" stroke="#b08a70" stroke-width="2.500"/><circle cx="10" cy="5.500" r="4.500" fill="#c8e6fa" stroke="#6d9fd8" stroke-width="1.300"/>'],
['Aggiorna','<path d="M3 8.500a5 5 0 018.500-4M13 7.500a5 5 0 01-8.500 4" stroke="#136a20" stroke-width="3.600"/><path d="M3 8.500a5 5 0 018.500-4M13 7.500a5 5 0 01-8.500 4" stroke="#35b845" stroke-width="2.200"/><path d="M8.500 7h6V1zM7.500 9H1.500v6z" fill="#1c8a2c"/>'],
['Indietro','<path d="M2 2h11L9.500 5.500 12 11l-1 3-2-1L6 9l-4 4z" fill="#3cb043" stroke="#1c7a28"/>'],
['Esegui','<path d="M2.500 2.500h9v12h-9z" fill="#c8ccd4" stroke="#80858f"/><rect x="5" y="1" width="5" height="2" fill="#777"/><path d="M14 3L7 8h4l-4 6 8-7h-3z" fill="#f04a10"/>'],
['Carrello','<path d="M0 3.500h3l3 7h6.500l2-6M4.500 5.500h9M5.500 8h8M7 5.500v5M9.500 5.500v5M12 5.500v5M14 4.500l2-1.500" stroke="#111" stroke-width="1.200"/><circle cx="7" cy="13.500" r="1.500" fill="#111"/><circle cx="12" cy="13.500" r="1.500" fill="#111"/>'],
['Rapporto','<rect x=".500" y="1.500" width="15" height="13" fill="#fff" stroke="#aaa"/><path d="M8 3l4 4H9v2H7V7H4z" fill="#000"/><rect x="2" y="3" width="2" height="2" fill="#d02020"/><rect x="13" y="4" width="2" height="2" fill="#228"/><path d="M2 10.500h12M2 12.500h12" stroke="#bbb"/>'],
['Strumenti','<path d="M8 8l6 6" stroke="#b88020" stroke-width="2.500"/><path d="M6 1l1.500 3L11 3 9.500 6l3 2-3 1L9 12 6.500 9.500 3 11l1-3.500L1 5.500 4.500 5z" fill="#ff8a50" stroke="#f08a6a" stroke-width=".7"/><circle cx="6.500" cy="6.500" r="2" fill="#ffe070"/>'],
['Esci','<circle cx="8" cy="8" r="7" fill="#e01818" stroke="#900"/><path d="M5 5l6 6M11 5l-6 6" stroke="#fff" stroke-width="2.300"/>']]);
$('sez').innerHTML = tb([
['Espandi',tree + '<path d="M3.500 14l-2 1.500M8.500 12v3h6" stroke="#222"/>'],
['Comprimi','<path d="M5.500 2.500h8v4h-8zM5.500 9.500h8v4h-8zM5 4.500H2.500v7H5" stroke="#222" stroke-width="1.200"/>'],
['Espandi livello',tree + '<path d="M7 13.500h5M9.500 11v5M14.500 11v5" stroke="#080"/>'],
['Comprimi livello','<path d="M3.500 1.500h8v4h-8zM3.500 7.500h8v4h-8zM3 3.500H1.500v6H3" stroke="#222"/><path d="M9 13.500h4M14.500 11v5" stroke="#900"/>'],
['Seleziona','<rect x=".500" y="1.500" width="15" height="13" fill="#dcdcdc" stroke="#666"/><rect y="1" width="16" height="2" fill="#000080"/><path d="M2 5.500h10M2 7.500h10M2 9.500h10M2 11.500h8" stroke="#555"/><path d="M9 4v9l2-2 2 3 1-1-2-3h3z" fill="#eee" stroke="#666" stroke-width=".8"/>'],
['Su','<path d="M7 7h2v7H7zM8 2l4 6H4z" fill="#ff0000"/>'],
['Giù','<path d="M7 2h2v7H7zM8 14l4-6H4z" fill="#ff0000"/>'],
['Colonne','<rect x="0" y="1" width="16" height="2" fill="#555"/><path d="M1 4.500h14" stroke="#999"/><path d="M1 6h3v9H1z" fill="#bbb"/><path d="M5.500 5.500h4v9h-4zM10.500 5.500h4v9h-4z" fill="#ffee30" stroke="#998a10"/>']]);
$('cop').innerHTML = tb([['Copia','<path d="M1.500 1.500h6l2 2v8h-8z" fill="#e4f0ff" stroke="#3a66c0"/><path d="M3 5h4M3 7h4" stroke="#6a90d8"/><path d="M6.500 4.500h6l3 3v7h-9z" fill="#e4f0ff" stroke="#3a66c0"/><path d="M8 9h5M8 11h5M8 13h5" stroke="#6a90d8"/>']]);
</script>
</body>
</html>
